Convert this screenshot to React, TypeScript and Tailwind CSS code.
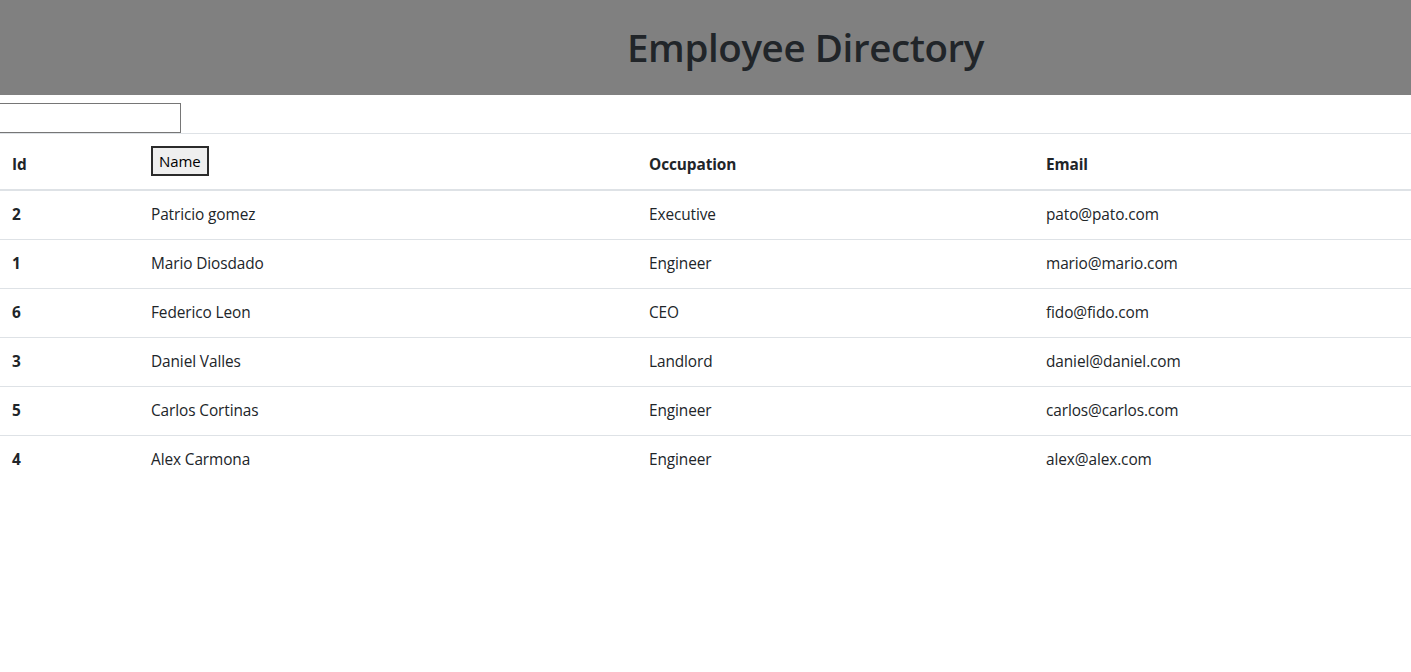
const employees = [
  { id: 2, name: "Patricio gomez", occupation: "Executive", email: "pato@pato.com" },
  { id: 1, name: "Mario Diosdado", occupation: "Engineer", email: "mario@mario.com" },
  { id: 6, name: "Federico Leon", occupation: "CEO", email: "fido@fido.com" },
  { id: 3, name: "Daniel Valles", occupation: "Landlord", email: "daniel@daniel.com" },
  { id: 5, name: "Carlos Cortinas", occupation: "Engineer", email: "carlos@carlos.com" },
  { id: 4, name: "Alex Carmona", occupation: "Engineer", email: "alex@alex.com" },
];

export default function App() {
  return (
    <div className="min-h-[672px] bg-white text-[#212529] font-['Open_Sans',sans-serif]">
      <header className="flex h-[95px] items-center justify-center bg-[#808080] pl-[200px]">
        <h1 className="text-[38.5px] font-semibold leading-[1.2] tracking-[-0.4px] text-[#212529]">Employee Directory</h1>
      </header>

      <div className="pt-[8px]">
        <input
          type="text"
          className="-ml-[10px] block h-[30px] w-[191px] border border-[#767676] bg-white px-2 text-[15px] outline-none"
        />
      </div>

      <table className="w-full border-collapse text-[15.4px] tracking-[-0.1px]">
        <thead>
          <tr className="border-t border-[#dee2e6] border-b-2">
            <th className="w-[139px] px-3 pt-3 pb-[13px] text-left align-bottom font-bold">Id</th>
            <th className="w-[498px] px-3 pt-3 pb-[13px] text-left align-bottom font-normal">
              <button className="block h-[30px] border-2 border-[#2b2b2b] bg-[#efefef] px-[6px] text-[15px] leading-none text-black">
                Name
              </button>
            </th>
            <th className="w-[397px] px-3 pt-3 pb-[13px] text-left align-bottom font-bold">Occupation</th>
            <th className="px-3 pt-3 pb-[13px] text-left align-bottom font-bold">Email</th>
          </tr>
        </thead>
        <tbody>
          {employees.map((e, i) => (
            <tr key={e.id} className={i < employees.length - 1 ? "border-b border-[#dee2e6]" : ""}>
              <td className="px-3 py-3 leading-6 font-bold">{e.id}</td>
              <td className="px-3 py-3 leading-6">{e.name}</td>
              <td className="px-3 py-3 leading-6">{e.occupation}</td>
              <td className="px-3 py-3 leading-6">{e.email}</td>
            </tr>
          ))}
        </tbody>
      </table>
    </div>
  );
}
